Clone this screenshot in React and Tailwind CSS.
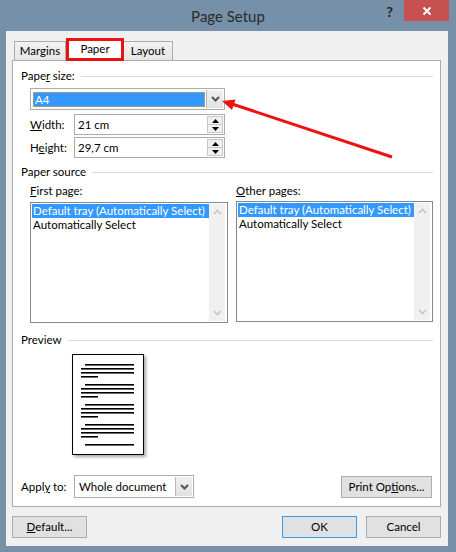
import React from "react";

function GroupHeader({ children }) {
  return (
    <div className="flex items-center h-[16px] pr-[7px]">
      <span className="whitespace-nowrap">{children}</span>
      <div className="flex-1 h-px bg-[#dcdcdc] ml-[6px]" />
    </div>
  );
}

function ChevronDown({ className = "" }) {
  return (
    <svg width="9" height="6" viewBox="0 0 9 6" className={className}>
      <polyline points="1,1 4.5,4.5 8,1" fill="none" stroke="#555" strokeWidth="2" />
    </svg>
  );
}

function DropButton() {
  return (
    <div className="w-[17px] flex items-center justify-center bg-linear-to-b from-[#f0f0f0] to-[#e2e2e2] border-l border-[#b8b8b8]">
      <ChevronDown />
    </div>
  );
}

function SpinInput({ value }) {
  return (
    <div className="w-[151px] h-[21px] border border-[#acacac] bg-white flex">
      <div className="flex-1 pl-[3px] leading-[19px] whitespace-nowrap">{value}</div>
      <div className="w-[16px] flex flex-col my-px mr-px border border-[#c8c8c8] bg-[#f0f0f0]">
        <div className="flex-1 flex items-center justify-center border-b border-[#c8c8c8]">
          <svg width="7" height="4" viewBox="0 0 7 4">
            <polygon points="0,4 7,4 3.5,0" fill="#000" />
          </svg>
        </div>
        <div className="flex-1 flex items-center justify-center">
          <svg width="7" height="4" viewBox="0 0 7 4">
            <polygon points="0,0 7,0 3.5,4" fill="#000" />
          </svg>
        </div>
      </div>
    </div>
  );
}

function ScrollChev({ up }) {
  return (
    <svg width="9" height="6" viewBox="0 0 9 6">
      <polyline
        points={up ? "1,5 4.5,1.5 8,5" : "1,1 4.5,4.5 8,1"}
        fill="none"
        stroke="#c4c4c4"
        strokeWidth="1.6"
      />
    </svg>
  );
}

function ListBox({ widthClass }) {
  return (
    <div className={`${widthClass} h-[121px] border border-[#828790] bg-white flex p-px`}>
      <div className="flex-1 min-w-0 flex flex-col">
        <div className="bg-[#3399ff] text-white pl-px h-[14px] leading-[14px] whitespace-nowrap overflow-hidden">
          Default tray (Automatically Select)
        </div>
        <div className="pl-px h-[14px] leading-[14px] whitespace-nowrap">Automatically Select</div>
      </div>
      <div className="w-[16px] shrink-0 mr-px bg-[#f0f0f0] flex flex-col justify-between items-center py-[5px]">
        <ScrollChev up />
        <ScrollChev />
      </div>
    </div>
  );
}

function Button({ children, primary, widthClass = "w-[75px]" }) {
  return (
    <div
      className={`${widthClass} h-[22px] flex items-center justify-center whitespace-nowrap bg-[#e1e1e1] border ${
        primary ? "border-[#3c9be8]" : "border-[#adadad]"
      }`}
    >
      {children}
    </div>
  );
}

function PreviewPage() {
  const groups = [10, 30, 50, 70];
  return (
    <div className="w-[72px] h-[101px] bg-white border border-black shadow-[2px_2px_3px_rgba(0,0,0,0.35)]">
      <svg width="70" height="99" viewBox="0 0 70 99">
        {groups.map((y) => (
          <g key={y} fill="#000">
            <rect x="12" y={y - 1} width="49" height="1.6" />
            <rect x="8" y={y + 3} width="53" height="1.6" />
            <rect x="8" y={y + 7} width="53" height="1.6" />
            <rect x="8" y={y + 11} width="17" height="1.6" />
          </g>
        ))}
        <rect x="12" y="89" width="49" height="1.6" fill="#000" />
      </svg>
    </div>
  );
}

export default function App() {
  return (
    <div className="relative w-[456px] h-[552px] bg-[#7590a8] flex flex-col font-['Lato',sans-serif] text-[11.5px] text-black overflow-hidden">
      {/* Title bar */}
      <div className="h-[31px] grid grid-cols-[1fr_auto_1fr] shrink-0">
        <div />
        <div className="text-[15px] text-[#2b2b2b] leading-[31px] pt-px">Page Setup</div>
        <div className="flex justify-end items-start">
          <div className="text-[14px] font-bold text-[#222] leading-[20px] mt-[2px] mr-[11px]">?</div>
          <div className="w-[45px] h-[21px] bg-[#c75050] flex items-center justify-center mr-[7px]">
            <svg width="10" height="10" viewBox="0 0 10 10">
              <path d="M1.5 1.5 L8.5 8.5 M8.5 1.5 L1.5 8.5" stroke="#fff" strokeWidth="2" />
            </svg>
          </div>
        </div>
      </div>

      {/* Client */}
      <div className="ml-[6px] mr-[8px] mb-[6px] flex-1 bg-[#f0f0f0] flex flex-col pt-[7px]">
        {/* Tabs */}
        <div className="flex items-end h-[22px] ml-[8px] relative z-10">
          <div className="w-[52px] h-[19px] border border-b-0 border-[#acacac] bg-linear-to-b from-[#f2f2f2] to-[#e6e6e6] flex items-center justify-center">
            Margins
          </div>
          <div className="w-[58px] h-[23px] -mb-px bg-white border-[3px] border-[#ee1111] flex items-center justify-center pb-[2px]">
            Paper
          </div>
          <div className="w-[49px] h-[19px] border border-b-0 border-l-0 border-[#acacac] bg-linear-to-b from-[#f2f2f2] to-[#e6e6e6] flex items-center justify-center">
            Layout
          </div>
        </div>

        {/* Panel */}
        <div className="ml-[6px] w-[429px] h-[447px] bg-white border border-[#adadad] flex flex-col pl-[8px]">
          <div className="mt-[7px]">
            <GroupHeader>
              Pape<span className="underline">r</span> size:
            </GroupHeader>
          </div>

          <div className="mt-[4px] ml-[9px] w-[195px] h-[22px] border border-[#acacac] bg-white flex p-px">
            <div className="flex-1 mt-[2px] mb-px ml-px mr-px bg-[#3399ff] border border-dotted border-[#f0a040] text-white leading-[14px] pl-px">
              A4
            </div>
            <DropButton />
          </div>

          <div className="mt-[4px] ml-[9px] flex items-center">
            <div className="w-[44px]">
              <span className="underline">W</span>idth:
            </div>
            <SpinInput value="21 cm" />
          </div>
          <div className="mt-[2px] ml-[9px] flex items-center">
            <div className="w-[44px]">
              H<span className="underline">e</span>ight:
            </div>
            <SpinInput value="29,7 cm" />
          </div>

          <div className="mt-[6px]">
            <GroupHeader>Paper source</GroupHeader>
          </div>

          <div className="mt-[3px] ml-[9px] flex gap-[8px]">
            <div className="flex flex-col">
              <div className="h-[16px] leading-[16px]">
                <span className="underline">F</span>irst page:
              </div>
              <div className="mt-[3px]">
                <ListBox widthClass="w-[198px]" />
              </div>
            </div>
            <div className="flex flex-col">
              <div className="h-[16px] leading-[16px]">
                <span className="underline">O</span>ther pages:
              </div>
              <div className="mt-[2px]">
                <ListBox widthClass="w-[197px]" />
              </div>
            </div>
          </div>

          <div className="mt-[9px]">
            <GroupHeader>Preview</GroupHeader>
          </div>

          <div className="mt-[6px] ml-[51px]">
            <PreviewPage />
          </div>

          <div className="mt-[20px] flex items-center pr-[8px]">
            <div className="w-[53px] whitespace-nowrap">
              Appl<span className="underline">y</span> to:
            </div>
            <div className="w-[120px] h-[23px] border border-[#acacac] bg-white flex p-px">
              <div className="flex-1 pl-[3px] leading-[19px] whitespace-nowrap overflow-hidden">Whole document</div>
              <DropButton />
            </div>
            <div className="flex-1" />
            <Button widthClass="w-[91px]">
              <span>
                Print Op<span className="underline">t</span>ions...
              </span>
            </Button>
          </div>
        </div>

        {/* Bottom buttons */}
        <div className="mt-[9px] ml-[6px] mr-[7px] flex items-center">
          <Button>
            <span>
              <span className="underline">D</span>efault...
            </span>
          </Button>
          <div className="flex-1" />
          <Button primary>OK</Button>
          <div className="w-[9px]" />
          <Button>Cancel</Button>
        </div>
      </div>

      {/* Red annotation arrow */}
      <svg
        className="absolute left-0 top-0 pointer-events-none"
        width="456"
        height="552"
        viewBox="0 0 456 552"
      >
        <line x1="392" y1="157" x2="232" y2="104" stroke="#ee1111" strokeWidth="3" />
        <polygon points="222,101 235.5,99.5 232,110" fill="#ee1111" />
      </svg>
    </div>
  );
}
